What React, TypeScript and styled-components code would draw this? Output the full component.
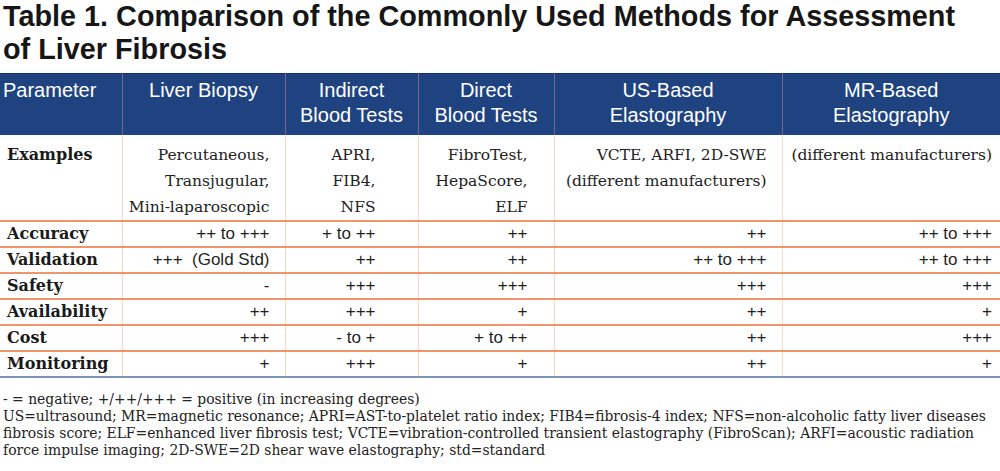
import React from "react";
import styled, { createGlobalStyle } from "styled-components";

const GlobalStyle = createGlobalStyle`
  html, body { margin: 0; padding: 0; background: #ffffff; }
  body { width: 1000px; overflow: hidden; }
`;

const Page = styled.div`
  width: 1000px;
  display: flex;
  flex-direction: column;
`;

const Title = styled.h1`
  margin: 0;
  padding: 0 0 0 3px;
  font-family: "Liberation Sans", Arial, sans-serif;
  font-weight: 700;
  font-size: 28.8px;
  line-height: 33px;
  color: #161616;
`;

const Table = styled.table`
  margin-top: 7px;
  width: 1000px;
  border-collapse: collapse;
  table-layout: fixed;
`;

const HeadRow = styled.tr`
  background: #1f4380;
  border-top: 1px solid #15336a;
`;

const HeadCell = styled.th<{ $align: "left" | "center"; $divider: boolean }>`
  height: 57px;
  padding: 4px 4px 0 ${(p) => (p.$align === "left" ? "3px" : "4px")};
  vertical-align: top;
  font-family: "Liberation Sans", Arial, sans-serif;
  font-weight: 400;
  font-size: 20px;
  line-height: 25px;
  color: #ffffff;
  text-align: ${(p) => p.$align};
  border-left: ${(p) => (p.$divider ? "1px solid #7b6288" : "none")};
`;

const BodyRow = styled.tr<{ $last?: boolean; $tall?: boolean }>`
  height: ${(p) => (p.$tall ? "86px" : "26px")};
  border-bottom: 2px solid ${(p) => (p.$last ? "#7f93b5" : "#f1956b")};
`;

const LabelCell = styled.td<{ $top?: boolean }>`
  padding: ${(p) => (p.$top ? "9px" : "0")} 4px 0 7px;
  vertical-align: ${(p) => (p.$top ? "top" : "middle")};
  text-align: left;
  white-space: nowrap;
  font-family: "DejaVu Serif", "Liberation Serif", serif;
  font-weight: 700;
  font-size: 16px;
  line-height: 22px;
  color: #1a1a1a;
`;

const ExampleCell = styled.td<{ $pr: number }>`
  padding: 7px ${(p) => p.$pr}px 0 0;
  vertical-align: top;
  text-align: right;
  white-space: nowrap;
  font-family: "DejaVu Serif", "Liberation Serif", serif;
  font-size: 15.5px;
  line-height: 26px;
  color: #222222;
  border-left: 1px solid #fcd8c2;
`;

const ValueCell = styled.td<{ $pr: number }>`
  padding: 0 ${(p) => p.$pr}px 0 0;
  vertical-align: middle;
  text-align: right;
  white-space: pre;
  font-family: "Liberation Sans", Arial, sans-serif;
  font-size: 17px;
  line-height: 22px;
  color: #1f1f1f;
  border-left: 1px solid #fcd8c2;
`;

const Notes = styled.div`
  margin-top: 13px;
  padding-left: 3px;
  font-family: "DejaVu Serif", "Liberation Serif", serif;
  font-size: 13.9px;
  line-height: 17px;
  color: #222222;
  white-space: nowrap;
`;

const colWidths = [122, 163, 133, 136, 228, 218];
const rightPad = [15, 42, 26, 15, 8];

const headers: { lines: string[]; align: "left" | "center" }[] = [
  { lines: ["Parameter"], align: "left" },
  { lines: ["Liver Biopsy"], align: "center" },
  { lines: ["Indirect", "Blood Tests"], align: "center" },
  { lines: ["Direct", "Blood Tests"], align: "center" },
  { lines: ["US-Based", "Elastography"], align: "center" },
  { lines: ["MR-Based", "Elastography"], align: "center" },
];

const examples: string[][] = [
  ["Percutaneous,", "Transjugular,", "Mini-laparoscopic"],
  ["APRI,", "FIB4,", "NFS"],
  ["FibroTest,", "HepaScore,", "ELF"],
  ["VCTE, ARFI, 2D-SWE", "(different manufacturers)"],
  ["(different manufacturers)"],
];

const rows: { label: string; values: string[] }[] = [
  { label: "Accuracy", values: ["++ to +++", "+ to ++", "++", "++", "++ to +++"] },
  { label: "Validation", values: ["+++  (Gold Std)", "++", "++", "++ to +++", "++ to +++"] },
  { label: "Safety", values: ["-", "+++", "+++", "+++", "+++"] },
  { label: "Availability", values: ["++", "+++", "+", "++", "+"] },
  { label: "Cost", values: ["+++", "- to +", "+ to ++", "++", "+++"] },
  { label: "Monitoring", values: ["+", "+++", "+", "++", "+"] },
];

const withBreaks = (lines: string[]) =>
  lines.map((l, i) => (
    <React.Fragment key={i}>
      {i > 0 && <br />}
      {l}
    </React.Fragment>
  ));

export default function App() {
  return (
    <Page>
      <GlobalStyle />
      <Title>
        Table 1. Comparison of the Commonly Used Methods for Assessment
        <br />
        of Liver Fibrosis
      </Title>
      <Table>
        <colgroup>
          {colWidths.map((w, i) => (
            <col key={i} style={{ width: w }} />
          ))}
        </colgroup>
        <thead>
          <HeadRow>
            {headers.map((h, i) => (
              <HeadCell key={i} $align={h.align} $divider={i > 0}>
                {withBreaks(h.lines)}
              </HeadCell>
            ))}
          </HeadRow>
        </thead>
        <tbody>
          <BodyRow $tall>
            <LabelCell $top>Examples</LabelCell>
            {examples.map((ex, i) => (
              <ExampleCell key={i} $pr={rightPad[i]}>
                {withBreaks(ex)}
              </ExampleCell>
            ))}
          </BodyRow>
          {rows.map((r, ri) => (
            <BodyRow key={r.label} $last={ri === rows.length - 1}>
              <LabelCell>{r.label}</LabelCell>
              {r.values.map((v, i) => (
                <ValueCell key={i} $pr={rightPad[i]}>
                  {v}
                </ValueCell>
              ))}
            </BodyRow>
          ))}
        </tbody>
      </Table>
      <Notes>
        - = negative; +/++/+++ = positive (in increasing degrees)
        <br />
        US=ultrasound; MR=magnetic resonance; APRI=AST-to-platelet ratio index; FIB4=fibrosis-4 index; NFS=non-alcoholic fatty liver diseases
        <br />
        fibrosis score; ELF=enhanced liver fibrosis test; VCTE=vibration-controlled transient elastography (FibroScan); ARFI=acoustic radiation
        <br />
        force impulse imaging; 2D-SWE=2D shear wave elastography; std=standard
      </Notes>
    </Page>
  );
}
